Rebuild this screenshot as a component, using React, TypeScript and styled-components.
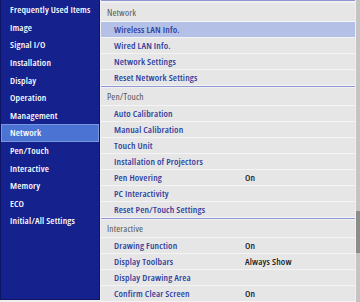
import React from "react";
import styled, { createGlobalStyle } from "styled-components";

const GlobalStyle = createGlobalStyle`
  html, body {
    margin: 0;
    padding: 0;
    background: #f0f0f0;
  }
  body {
    font-family: "Open Sans", "Noto Sans", sans-serif;
  }
`;

type Row = { label: string; value?: string; active?: boolean };
type Section = { title: string; rows: Row[] };

const categories = [
  "Frequently Used Items",
  "Image",
  "Signal I/O",
  "Installation",
  "Display",
  "Operation",
  "Management",
  "Network",
  "Pen/Touch",
  "Interactive",
  "Memory",
  "ECO",
  "Initial/All Settings",
];

const sections: Section[] = [
  {
    title: "Network",
    rows: [
      { label: "Wireless LAN Info.", active: true },
      { label: "Wired LAN Info." },
      { label: "Network Settings" },
      { label: "Reset Network Settings" },
    ],
  },
  {
    title: "Pen/Touch",
    rows: [
      { label: "Auto Calibration" },
      { label: "Manual Calibration" },
      { label: "Touch Unit" },
      { label: "Installation of Projectors" },
      { label: "Pen Hovering", value: "On" },
      { label: "PC Interactivity" },
      { label: "Reset Pen/Touch Settings" },
    ],
  },
  {
    title: "Interactive",
    rows: [
      { label: "Drawing Function", value: "On" },
      { label: "Display Toolbars", value: "Always Show" },
      { label: "Display Drawing Area" },
      { label: "Confirm Clear Screen", value: "On" },
    ],
  },
];

const Screen = styled.div`
  display: flex;
  width: 360px;
  height: 302px;
  overflow: hidden;
`;

const Sidebar = styled.nav`
  width: 98px;
  height: 298px;
  flex-shrink: 0;
  padding-top: 1px;
  background: #15218d;
  border-left: 1px solid #0b1465;
  border-right: 1px solid #0b1465;
  border-bottom: 1px solid #0b1465;
`;

const Category = styled.div<{ $selected?: boolean }>`
  height: 17.6px;
  box-sizing: border-box;
  display: flex;
  align-items: center;
  padding-left: 8px;
  font-size: 9.5px;
  font-weight: 600;
  font-stretch: 87%;
  letter-spacing: 0.15px;
  color: #ffffff;
  white-space: nowrap;
  background: ${(p) => (p.$selected ? "#4b73d3" : "transparent")};
  border: 1px solid ${(p) => (p.$selected ? "#7a96dc" : "transparent")};
`;

const Content = styled.div`
  flex: 1;
  display: flex;
  margin-left: 1px;
`;

const List = styled.div`
  flex: 1;
  display: flex;
  flex-direction: column;
`;

const SectionBlock = styled.section<{ $first?: boolean }>`
  border-top: 1px solid #8f98d4;
  padding-top: ${(p) => (p.$first ? "2px" : "1px")};
`;

const Header = styled.div<{ $first?: boolean }>`
  height: ${(p) => (p.$first ? "19px" : "18px")};
  display: flex;
  align-items: center;
  padding-left: 6px;
  background: #e6e6e6;
  border-bottom: 1px solid #f4f4f4;
  box-sizing: border-box;
  font-size: 9.5px;
  font-weight: 400;
  font-stretch: 87%;
  letter-spacing: 0.15px;
  color: #555555;
`;

const Item = styled.div<{ $active?: boolean }>`
  height: 16px;
  box-sizing: border-box;
  display: grid;
  grid-template-columns: 131px 1fr;
  align-items: center;
  padding-left: 13px;
  background: ${(p) => (p.$active ? "#b4c0e5" : "#e6e6e6")};
  border-bottom: 1px solid #f4f4f4;
  font-size: 9.5px;
  font-weight: 600;
  font-stretch: 87%;
  letter-spacing: 0.15px;
  white-space: nowrap;
`;

const Label = styled.span`
  color: #2f3d9e;
`;

const Value = styled.span`
  color: #1e1e1e;
`;

const Scrollbar = styled.div`
  position: relative;
  width: 4px;
  margin-left: 1px;
  background: #c4c4c4;
`;

const Thumb = styled.div`
  position: absolute;
  left: 0;
  right: 0;
  top: 211px;
  height: 42px;
  background: #8c8c8c;
`;

export default function App() {
  return (
    <>
      <GlobalStyle />
      <Screen>
        <Sidebar>
          {categories.map((c) => (
            <Category key={c} $selected={c === "Network"}>
              {c}
            </Category>
          ))}
        </Sidebar>
        <Content>
          <List>
            {sections.map((s, i) => (
              <SectionBlock key={s.title} $first={i === 0}>
                <Header $first={i === 0}>{s.title}</Header>
                {s.rows.map((r) => (
                  <Item key={r.label} $active={r.active}>
                    <Label>{r.label}</Label>
                    {r.value && <Value>{r.value}</Value>}
                  </Item>
                ))}
              </SectionBlock>
            ))}
          </List>
          <Scrollbar>
            <Thumb />
          </Scrollbar>
        </Content>
      </Screen>
    </>
  );
}
